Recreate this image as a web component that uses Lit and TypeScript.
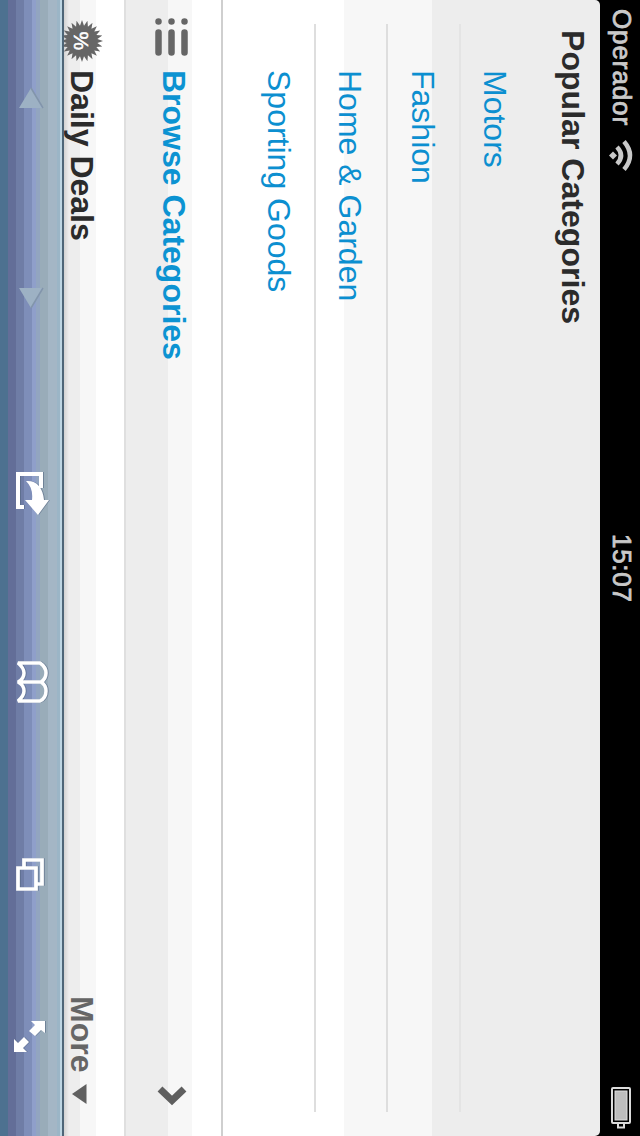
import { LitElement, html, css, svg } from "lit";
import { customElement } from "lit/decorators.js";

// Outline of the toothed badge beside the deals label.
const TEETH = 24;
const badgePoints = Array.from({ length: TEETH * 2 }, (_, i) => {
  const angle = (Math.PI * i) / TEETH;
  const r = i % 2 ? 15.5 : 21;
  return `${(22 + r * Math.cos(angle)).toFixed(2)},${(22 + r * Math.sin(angle)).toFixed(2)}`;
}).join(" ");

@customElement("status-bar")
class StatusBar extends LitElement {
  static styles = css`
    :host {
      display: grid;
      grid-template-columns: 1fr auto 1fr;
      align-items: center;
      box-sizing: border-box;
      block-size: 40px;
      padding-inline: 9px 5px;
      background: #000;
      color: #c9c9c9;
      font-size: 26px;
      line-height: 37px;
    }
    .carrier { display: flex; align-items: flex-start; }
    .name { -webkit-text-stroke: 0.8px #c9c9c9; letter-spacing: 0.9px; }
    .wifi { margin-inline-start: 11px; }
    .clock { -webkit-text-stroke: 0.8px #c9c9c9; letter-spacing: 0.7px; margin-block-end: 2px; margin-inline-end: 3px; }
    .end { display: flex; justify-content: flex-end; }
    svg { display: block; }
  `;
  render() {
    return html`
      <div class="carrier">
        <span class="name">Operador</span>
        <svg class="wifi" width="40" height="36" viewBox="0 0 40 36" fill="none" stroke="#c9c9c9" stroke-width="4.500">
          <path d="M9 18.500 L13 14.500 L17 18.500 L13 22.500 Z" fill="#c9c9c9" stroke="none" />
          <path d="M17 10 Q25 18.500 17 27" />
          <path d="M24 4.500 Q36 18.500 24 32.500" />
        </svg>
      </div>
      <span class="clock">15:07</span>
      <div class="end">
        <svg width="40" height="44" viewBox="0 0 40 44">
          <rect x="12" y="1" width="18" height="35" fill="none" stroke="#dcdcdc" stroke-width="2" rx="1" />
          <rect x="15" y="4" width="12" height="29" fill="#bdbdbd" stroke="#dedede" stroke-width="1" />
          <path d="M18 37 V40.500 H24 V37" fill="none" stroke="#dcdcdc" stroke-width="2" />
        </svg>
      </div>
    `;
  }
}

@customElement("category-panel")
class CategoryPanel extends LitElement {
  static styles = css`
    :host {
      display: flex;
      flex-direction: column;
      box-sizing: border-box;
      block-size: 379px;
      border-block-end: 2px solid #cfcfcf;
      border-radius: 0 5px 5px 0;
      background: linear-gradient(to right, #fff 0 121px, #f7f7f7 121px 209px, #ededed 209px);
    }
    h2 {
      margin: 0;
      padding-inline-start: 29.500px;
      block-size: 69px;
      line-height: 54px;
      font-size: 32px;
      font-weight: 700;
      letter-spacing: 0.04px;
      color: #2b2b2b;
    }
    .row {
      box-sizing: border-box;
      block-size: 72.300px;
      margin-inline: 24px;
      padding-inline-start: 46px;
      line-height: 72px;
      font-size: 32px;
      color: #0c8fd0;
      border-block-end: 2px solid #dedede;
    }
    .row:first-of-type { border-color: #e4e4e4; }
    .row:last-of-type { border: 0; line-height: 71px; }
  `;
  render() {
    return html`
      <h2>Popular Categories</h2>
      ${["Motors", "Fashion", "Home & Garden", "Sporting Goods"].map(
        (name) => html`<div class="row">${name}</div>`
      )}
    `;
  }
}

@customElement("browse-row")
class BrowseRow extends LitElement {
  static styles = css`
    :host {
      display: flex;
      align-items: center;
      box-sizing: border-box;
      block-size: 97px;
      border-block-end: 2px solid #dfdfdf;
      padding-inline: 16px 28px;
      background: linear-gradient(to right, #ededed 0 42px, #f7f7f7 42px 66px, #fff 66px);
      font-size: 32px;
      font-weight: 700;
      line-height: 95px;
      color: #0c93d2;
    }
    .list, .chevron { display: block; flex: none; }
    .label { margin-inline-start: 12px; margin-block-start: 1px; }
    .chevron { margin-inline-start: auto; }
  `;
  render() {
    return html`
      <svg class="list" width="97" height="42" viewBox="0 0 97 42" stroke="#666" stroke-width="6.500" stroke-linecap="round">
        <path d="M33.500 5.500h.01M46.500 5.500h.01M59.500 5.500h.01M33.500 16.500v20M46.500 16.500v20M59.500 16.500v20" />
      </svg>
      <span class="label">Browse Categories</span>
      <svg class="chevron" width="97" height="24" viewBox="0 0 97 24" fill="none" stroke="#5f5f5f" stroke-width="7">
        <path d="M35 5 L47 16.500 L59 5" />
      </svg>
    `;
  }
}

@customElement("deals-row")
class DealsRow extends LitElement {
  static styles = css`
    :host {
      display: flex;
      align-items: center;
      block-size: 60px;
      padding-inline: 19px 30px;
      background: linear-gradient(to right, #d2d2d2 0, #ededed 5px 16px, #f7f7f7 16px 32px, #fff 32px);
      font-size: 32px;
      font-weight: 700;
      line-height: 36px;
      color: #2b2b2b;
    }
    svg { display: block; flex: none; }
    .deals, .more { margin-block-start: 25px; }
    .deals { margin-inline-start: 7px; }
    .more { margin-inline-start: auto; color: #666; }
    .percent {
      font-size: 21px;
      font-weight: 400;
      writing-mode: horizontal-tb;
      stroke: #fff;
      stroke-width: 0.5px;
    }
    .arrow { margin-inline-start: 12px; }
  `;
  render() {
    return html`
      <svg width="60" height="44" viewBox="0 0 60 44">
        <g transform="translate(-4 0)">
          <polygon points=${badgePoints} fill="#666" />
          ${svg`<text class="percent" transform="translate(14 12.500) rotate(90)" fill="#fff">%</text>`}
        </g>
      </svg>
      <span class="deals">Daily Deals</span>
      <span class="more">More</span>
      <svg class="arrow" width="60" height="22" viewBox="0 0 60 22">
        <path d="M22.500 0 V20 L8 10 Z" fill="#606060" />
      </svg>
    `;
  }
}

@customElement("browser-toolbar")
class BrowserToolbar extends LitElement {
  static styles = css`
    :host {
      display: grid;
      grid-template-columns: 196px 204px 186px 192px 194px 130px 1fr;
      align-items: center;
      justify-items: center;
      block-size: 64px;
      background: linear-gradient(
        to right,
        #4d7190 0 8px,
        #636e98 8px 16px,
        #6f7da6 16px 24px,
        #7e8eb9 24px 32px,
        #8f9fca 32px 36px,
        #92a5c0 36px 40px,
        #99acb9 40px 48px,
        #a4b6c5 48px 57px,
        #9bb5c6 57px 60px,
        #bdd5e2 60px 62px,
        #4d6577 62px 64px
      );
    }
    svg { display: block; filter: drop-shadow(1.500px 0 0 #53658099); }
    .dim { filter: none; }
  `;
  render() {
    return html`
      <svg class="dim" width="64" height="24" viewBox="0 0 64 24"><path d="M19 22 L31 2 L43 22Z" fill="#9db1c4" /><path d="M31 2 L43 22" stroke="#8295ab" stroke-width="1.500" /></svg>
      <svg class="dim" width="64" height="24" viewBox="0 0 64 24"><path d="M19 2 L31 22 L43 2Z" fill="#9db1c4" /><path d="M31 22 L43 2" stroke="#8295ab" stroke-width="1.500" /></svg>
      <svg width="64" height="46" viewBox="0 0 64 46">
        <path d="M41 18 V4 H18 V37 H24" fill="none" stroke="#fff" stroke-width="4" />
        <path d="M26 11 C36 10 43 17 44 30 L49 30 L38 45 L25 30 L32 30 C33 22 31 16 26 11Z" fill="#fff" />
      </svg>
      <svg width="64" height="44" viewBox="0 0 64 44" fill="none" stroke="#fff" stroke-width="3.500" stroke-linejoin="bevel">
        <path d="M18 3 H40 Q46 7 46 13 Q46 19 41 22 Q46 25 46 31 Q46 38 40 41 H18 Q24 36 24 31 Q24 25 18 22 Q24 19 24 13 Q24 8 18 3Z M18 22H41" />
      </svg>
      <svg width="64" height="36" viewBox="0 0 64 36" fill="none" stroke="#fff" stroke-width="3.700">
        <path d="M24 10 V3 H42 V27 H37" /><path d="M18 11 H36 V32 H18Z" />
      </svg>
      <svg width="64" height="36" viewBox="0 0 64 36">
        <path d="M31 2 H45 V14 L41 11 L35 17 L29 12 L35 6Z M14 20 L18 24 L24 18 L29 23 L23 29 L27 33 H14Z" fill="#fff" />
      </svg>
    `;
  }
}

@customElement("app-root")
class AppRoot extends LitElement {
  static styles = css`
    :host {
      display: flex;
      flex-direction: column;
      writing-mode: vertical-rl;
      width: 640px;
      height: 1136px;
      overflow: hidden;
      background: #000;
      font-family: "Liberation Sans", Arial, sans-serif;
      white-space: nowrap;
    }
    :host > * { flex: none; }
  `;
  render() {
    return html`
      <status-bar></status-bar>
      <category-panel></category-panel>
      <browse-row></browse-row>
      <deals-row></deals-row>
      <browser-toolbar></browser-toolbar>
    `;
  }
}
